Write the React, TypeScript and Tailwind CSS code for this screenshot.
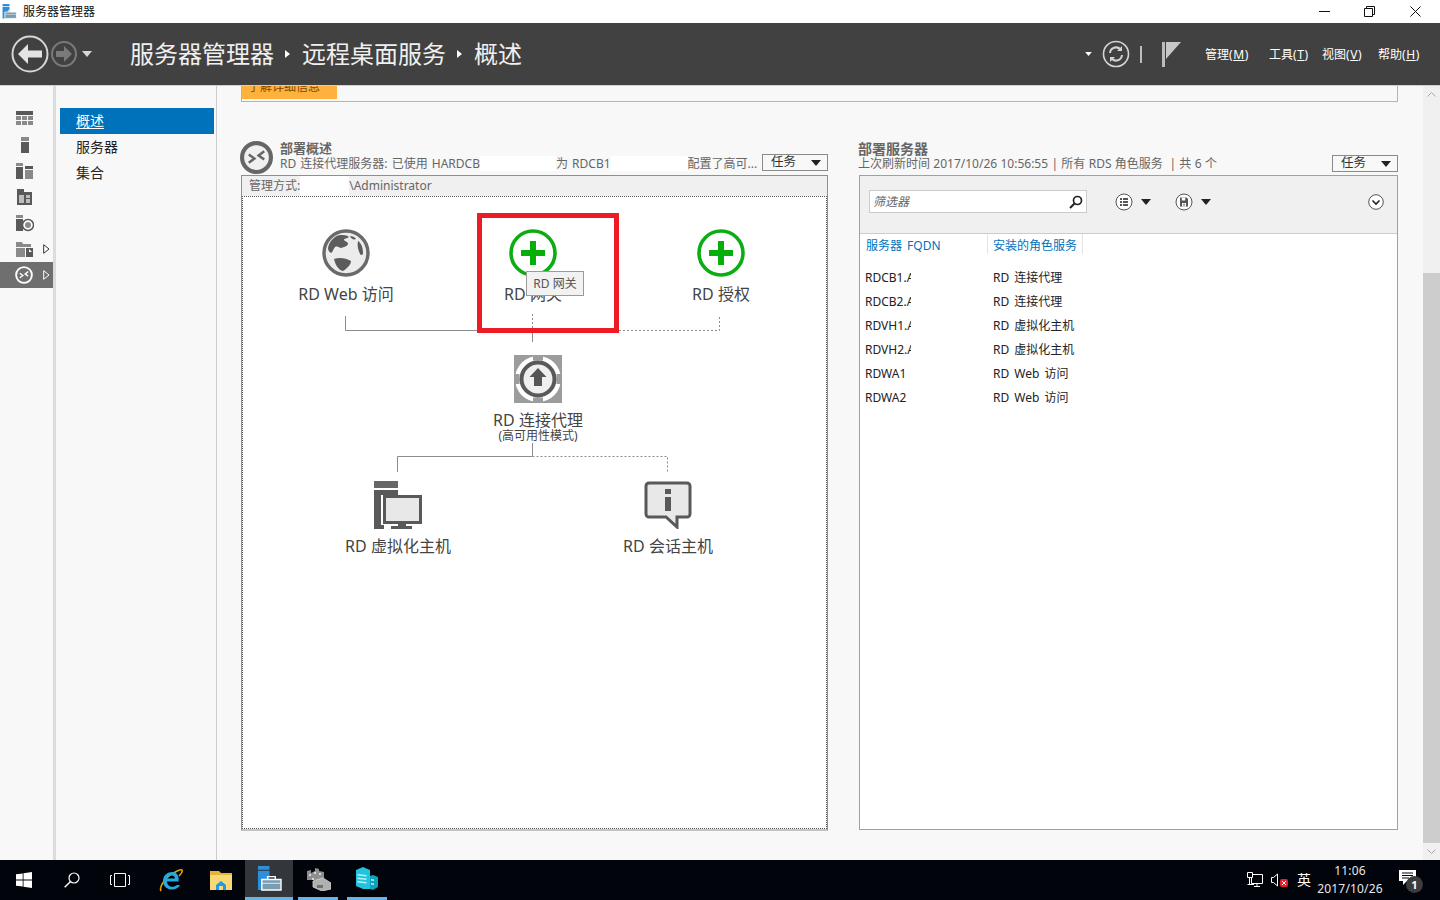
import React from "react";

const FONT = '"Noto Sans","Noto Sans CJK SC",sans-serif';

function Tri({ c = "#fff", w = 10, h = 6 }: { c?: string; w?: number; h?: number }) {
  return (
    <svg width={w} height={h} viewBox="0 0 10 6">
      <path d="M0 0h10L5 6z" fill={c} />
    </svg>
  );
}

function TasksBtn() {
  return (
    <div className="w-[66px] h-[17px] border border-[#8a8a8a] bg-[#f8f8f8] flex items-center justify-between pl-2 pr-[6px] text-[12.5px] leading-none text-[#333]">
      <span>任务</span>
      <Tri c="#222" />
    </div>
  );
}

function NavIcon({ i }: { i: number }) {
  const dark = "#595959";
  const mid = "#8a8a8a";
  const c = [
    <g key="0"><path d="M0 0h17v4H0z" fill={dark} /><path d="M0 5h5v4H0zM6 5h5v4H6zM12 5h5v4h-5zM0 10h5v4H0zM6 10h5v4H6zM12 10h5v4h-5z" fill={mid} /></g>,
    <g key="1"><path d="M5 0h8v4H5z" fill={mid} /><path d="M5 5h8v11H5z" fill={dark} /></g>,
    <g key="2"><path d="M0 0h7v3H0z" fill={mid} /><path d="M0 4h7v12H0z" fill={dark} /><path d="M9 3h8v3H9z" fill={dark} /><path d="M9 7h8v9H9z" fill={mid} /></g>,
    <g key="3"><path d="M1 0h7v3h8v13H1z" fill={dark} /><path d="M3 6h5v8H3zM10 6h4v3h-4zM10 10h4v4h-4z" fill="#bdbdbd" /></g>,
    <g key="4"><path d="M0 0h7v3H0z" fill={mid} /><path d="M0 4h7v12H0z" fill={dark} /><circle cx="12" cy="10" r="5.5" fill="#fff" stroke={dark} strokeWidth="1.5" /><circle cx="12" cy="10" r="3" fill={mid} /></g>,
    <g key="5"><path d="M0 1h6l1 2h8v3H0z" fill={mid} /><path d="M0 7h9v9H0z" fill={mid} /><path d="M10 7h7v9h-7z" fill={dark} /><path d="M13 8l3 3h-3z" fill="#fff" /></g>,
  ][i];
  return (
    <svg width="18" height="17" viewBox="0 0 18 17">
      {c}
    </svg>
  );
}

function RdsGlyph({ stroke, size, bg, sw = 3.4 }: { stroke: string; size: number; bg: string; sw?: number }) {
  return (
    <svg width={size} height={size} viewBox="0 0 32 32">
      <circle cx="16" cy="16" r="14" fill={bg} stroke={stroke} strokeWidth={sw} />
      <path d="M8.500 13l5.500 4-5.500 4M23.500 10l-5.500 4 5.500 4" fill="none" stroke={stroke} strokeWidth="2.400" />
    </svg>
  );
}

function Plus() {
  return (
    <svg width="48" height="48" viewBox="0 0 48 48">
      <circle cx="24" cy="24" r="22" fill="#fff" stroke="#0bad12" strokeWidth="3.6" />
      <path d="M21 12h6v9h9v6h-9v9h-6v-9h-9v-6h9z" fill="#07ae07" />
    </svg>
  );
}

function Globe() {
  return (
    <svg width="48" height="48" viewBox="0 0 48 48">
      <circle cx="24" cy="24" r="22" fill="#ececec" stroke="#6a6a6a" strokeWidth="3.400" />
      <path d="M6 19c1-6 6-12 12-13 3 0 7 0 9 2-2 2-5 1-5 3 1 2 4 1 4 4-1 3-5 3-7 4-3-1-4-2-6-1-2 2-2 5-4 6-2-1-3-3-3-5z" fill="#5c5c5c" />
      <path d="M12 30c5-2 12-1 17 2 0 4-5 8-8 10-5-1-8-7-9-12z" fill="#5c5c5c" />
      <path d="M36 12c3 2 5 6 5 12 0 2-2 3-3 1-2-4-3-9-2-13zM28 7c2 0 5 1 6 3-2 1-5 0-6-3z" fill="#5c5c5c" />
    </svg>
  );
}

function Broker() {
  return (
    <svg width="48" height="48" viewBox="0 0 48 48">
      <path d="M0 0h48v48H0z" fill="#9c9c9c" />
      <circle cx="24" cy="24" r="23" fill="#fff" />
      <path d="M19 0h10v5.500H19zM19 42.500h10V48H19zM0 19h5.500v10H0zM42.500 19H48v10h-5.500z" fill="#9c9c9c" />
      <circle cx="24" cy="24" r="16.500" fill="#efefef" stroke="#595959" strokeWidth="4" />
      <path d="M24 13l8.500 9H28v9h-8v-9h-4.500z" fill="#555" />
    </svg>
  );
}

function Virt() {
  return (
    <svg width="48" height="48" viewBox="0 0 48 48">
      <path d="M0 0h24v7H0z" fill="#666" />
      <path d="M0 9h24v5H7v30h3v4H0z" fill="#595959" />
      <path d="M9 14h39v29H32v2h6v3H17v-3h7v-2H9z" fill="#595959" />
      <path d="M12 17h33v23H12z" fill="#e8e8e8" />
    </svg>
  );
}

function Session() {
  return (
    <svg width="48" height="48" viewBox="0 0 48 48">
      <path d="M5 2h38a3 3 0 0 1 3 3v28a3 3 0 0 1-3 3H33v10L22 36H5a3 3 0 0 1-3-3V5a3 3 0 0 1 3-3z" fill="#e8e8e8" stroke="#595959" strokeWidth="3" />
      <path d="M21 8h6v5h-6zM21 16h6v14h-6z" fill="#595959" />
    </svg>
  );
}

function DiagramNode({ className, label, children }: { className: string; label: string; children: React.ReactNode }) {
  return (
    <div className={"absolute w-[160px] flex flex-col items-center " + className}>
      {children}
      <div className="mt-[6px] text-[16px] leading-[22px] text-[#444] whitespace-nowrap">{label}</div>
    </div>
  );
}

const rows = [
  ["RDCB1.AD", "RD 连接代理"],
  ["RDCB2.AD", "RD 连接代理"],
  ["RDVH1.AD", "RD 虚拟化主机"],
  ["RDVH2.AD", "RD 虚拟化主机"],
  ["RDWA1", "RD Web 访问"],
  ["RDWA2", "RD Web 访问"],
];

function Menu({ t, k, w }: { t: string; k: string; w: string }) {
  return (
    <div className={"mt-[1px] text-[12px] leading-none text-white whitespace-nowrap " + w}>
      {t}
      <span className="tracking-[0.6px]">(<span className="underline">{k}</span>)</span>
    </div>
  );
}

function TaskBtn({ className = "w-12", children }: { className?: string; children: React.ReactNode }) {
  return <div className={"h-10 flex items-center justify-center shrink-0 " + className}>{children}</div>;
}

function SmIcon({ size = 18 }: { size?: number }) {
  return (
    <svg width={size} height={size} viewBox="0 0 26 26">
      <path d="M1 0h12v4H1zM1 5h12v20H1z" fill="#2b8fdc" />
      <path d="M5 14h20v11H5z" fill="#7b9bb0" stroke="#fff" strokeWidth="1.400" />
      <path d="M5 18h20" stroke="#fff" strokeWidth=".8" />
      <path d="M11 14v-3h8v3" fill="none" stroke="#fff" strokeWidth="1.400" />
    </svg>
  );
}

export default function App() {
  return (
    <div className="w-[1440px] h-[900px] overflow-hidden flex flex-col bg-white" style={{ fontFamily: FONT }}>
      {/* title bar */}
      <div className="h-[23px] shrink-0 flex items-center bg-white pl-[2px]">
        <SmIcon size={15} />
        <span className="ml-[6px] text-[12px] leading-none text-[#111]">服务器管理器</span>
        <div className="ml-auto flex items-center">
          <div className="w-[47px] flex justify-center">
            <svg width="11" height="11" viewBox="0 0 11 11"><path d="M0 5.500h11" stroke="#111" /></svg>
          </div>
          <div className="w-[42px] flex justify-center">
            <svg width="11" height="11" viewBox="0 0 11 11"><path d="M.5 2.500h8v8h-8zM2.500 2.500v-2h8v8h-2" fill="none" stroke="#111" /></svg>
          </div>
          <div className="w-[50px] flex justify-center">
            <svg width="11" height="11" viewBox="0 0 11 11"><path d="M.5.500l10 10M10.500.500l-10 10" stroke="#111" /></svg>
          </div>
        </div>
      </div>

      {/* header */}
      <div className="h-[63px] shrink-0 bg-[#414141] border-b border-[#cfcfcf] flex items-center pl-[11px] pr-[21px]">
        <svg width="38" height="38" viewBox="0 0 38 38">
          <circle cx="19" cy="19" r="17.500" fill="none" stroke="#d6d6d6" strokeWidth="2" />
          <path d="M7 19l10-10v6.500h14v7H17V29z" fill="#e4e4e4" />
        </svg>
        <svg width="26" height="26" viewBox="0 0 26 26" className="ml-[2px]">
          <circle cx="13" cy="13" r="12" fill="none" stroke="#7a7a7a" strokeWidth="2" />
          <path d="M21 13l-8-8v5H5v6h8v5z" fill="#7a7a7a" />
        </svg>
        <span className="ml-[5px]"><Tri c="#d8d8d8" /></span>
        <div className="ml-[38px] flex items-center text-[24px] leading-none text-[#f0f0f0] whitespace-nowrap">
          <span>服务器管理器</span>
          <svg width="5" height="8" viewBox="0 0 5 8" className="ml-[11px] mr-[12px]"><path d="M0 0l5 4-5 4z" fill="#fff" /></svg>
          <span>远程桌面服务</span>
          <svg width="5" height="8" viewBox="0 0 5 8" className="ml-[11px] mr-[12px]"><path d="M0 0l5 4-5 4z" fill="#fff" /></svg>
          <span>概述</span>
        </div>
        <div className="ml-auto flex items-center">
          <Tri c="#fff" w={7} h={4} />
          <svg width="28" height="28" viewBox="0 0 28 28" className="ml-[10px]">
            <circle cx="14" cy="14" r="12.500" fill="none" stroke="#d4d4d4" strokeWidth="1.600" />
            <path d="M8 13a6 6 0 0 1 10.500-3.500M20 15a6 6 0 0 1-10.500 3.500" fill="none" stroke="#d4d4d4" strokeWidth="2" />
            <path d="M20 6v5h-5zM8 22v-5h5z" fill="#d4d4d4" />
          </svg>
          <div className="ml-[10px] w-[2px] h-[17px] bg-[#bdbdbd]" />
          <svg width="19" height="25" viewBox="0 0 19 25" className="ml-[20px] mr-[24px]">
            <path d="M0 0h3v25H0z" fill="#bdbdbd" />
            <path d="M4 0h15L4 17z" fill="#c8c8c8" />
          </svg>
          <Menu t="管理" k="M" w="w-[64px]" />
          <Menu t="工具" k="T" w="w-[53px]" />
          <Menu t="视图" k="V" w="w-[56px]" />
          <Menu t="帮助" k="H" w="w-[41px]" />
        </div>
      </div>

      {/* main */}
      <div className="flex-1 min-h-0 flex bg-[#f8f8f8]">
        {/* rail */}
        <div className="w-[56px] shrink-0 border-r-[3px] border-[#dcdcdc] pt-[20px] flex flex-col">
          {[0, 1, 2, 3, 4, 5].map((i) => (
            <div key={i} className="h-[26px] flex items-center pl-[16px] relative">
              <NavIcon i={i} />
              {i === 5 && (
                <svg width="7" height="10" viewBox="0 0 7 10" className="absolute left-[43px] top-[8px]"><path d="M.7 .7L6 5 .7 9.300z" fill="#fff" stroke="#333" /></svg>
              )}
            </div>
          ))}
          <div className="h-[26px] bg-[#6f6f6f] flex items-center pl-[15px] relative">
            <RdsGlyph stroke="#fff" size={18} bg="transparent" />
            <svg width="7" height="10" viewBox="0 0 7 10" className="absolute left-[43px] top-[8px]"><path d="M.7 .7L6 5 .7 9.300z" fill="none" stroke="#fff" /></svg>
          </div>
        </div>

        {/* nav */}
        <div className="w-[161px] shrink-0 border-r border-[#cccccc] pl-[4px] pt-[22px] text-[14px] leading-none text-[#222]">
          <div className="w-[154px] h-[26px] bg-[#0072bc] text-white flex items-center pl-[16px]"><span className="underline underline-offset-2">概述</span></div>
          <div className="w-[154px] h-[26px] flex items-center pl-[16px]">服务器</div>
          <div className="w-[154px] h-[26px] flex items-center pl-[16px]">集合</div>
        </div>

        {/* content */}
        <div className="flex-1 min-w-0 pl-[24px] pr-[25px]">
          <div className="h-[16px] border-b border-x border-[#b5b5b5] overflow-hidden bg-[#f8f8f8]">
            <div className="w-[95px] h-[13px] bg-[#ffb13d] overflow-hidden text-[12px] leading-none text-[#7a4a00] pl-[6px]">
              <div className="-mt-[5px] whitespace-nowrap">了解详细信息</div>
            </div>
          </div>

          <div className="flex mt-[38px] gap-[31px]">
            {/* left panel */}
            <div className="w-[587px] shrink-0">
              <div className="h-[35px] relative pl-[39px]">
                <div className="absolute -left-[1px] top-[1px]">
                  <RdsGlyph stroke="#666" size={33} bg="#f0f0f0" sw={4} />
                </div>
                <div className="text-[13px] leading-[15px] pt-[1px] font-bold text-[#666]">部署概述</div>
                <div className="text-[12px] leading-[15px] text-[#666] whitespace-nowrap flex [word-spacing:1px]">
                  <span>RD 连接代理服务器: 已使用 HARDCB</span>
                  <span className="w-[76px] h-[15px] bg-white" />
                  <span>为 RDCB1</span>
                  <span className="w-[77px] h-[15px] bg-white" />
                  <span>配置了高可...</span>
                </div>
                <div className="absolute right-0 top-[14px]"><TasksBtn /></div>
              </div>
              <div className="h-[656px] border border-[#8f8f8f] border-b-2 border-b-[#c4c4c4] bg-white flex flex-col">
                <div className="h-[20px] shrink-0 bg-[#f0f0f0] flex items-center pl-[7px] text-[12px] leading-none text-[#666] whitespace-nowrap">
                  <span>管理方式:</span>
                  <span className="w-[49px] h-[20px] bg-white" />
                  <span>\Administrator</span>
                </div>
                <div className="relative flex-1 border border-dotted border-[#555]">
                  <svg className="absolute left-0 top-0" width="583" height="632" viewBox="243 197 583 632">
                    <path d="M345.500 316v14.500H478" fill="none" stroke="#8c8c8c" />
                    <path d="M619 330.500h100.500V316" fill="none" stroke="#8c8c8c" strokeDasharray="2 2" />
                    <path d="M532.500 314v14" fill="none" stroke="#8c8c8c" strokeDasharray="2 2" />
                    <path d="M532.500 328v14" fill="none" stroke="#8c8c8c" />
                    <path d="M532.500 443v13.500H397.500V472" fill="none" stroke="#8c8c8c" />
                    <path d="M532.500 456.500h135V472" fill="none" stroke="#8c8c8c" strokeDasharray="2 2" />
                  </svg>
                  <DiagramNode className="left-[23px] top-[32px]" label="RD Web 访问"><Globe /></DiagramNode>
                  <DiagramNode className="left-[210px] top-[32px]" label="RD 网关"><Plus /></DiagramNode>
                  <DiagramNode className="left-[398px] top-[32px]" label="RD 授权"><Plus /></DiagramNode>
                  <DiagramNode className="left-[215px] top-[158px]" label="RD 连接代理">
                    <Broker />
                  </DiagramNode>
                  <div className="absolute left-[215px] top-[232px] w-[160px] text-center text-[12px] leading-[14px] text-[#444]">(高可用性模式)</div>
                  <DiagramNode className="left-[75px] top-[284px]" label="RD 虚拟化主机"><Virt /></DiagramNode>
                  <DiagramNode className="left-[345px] top-[284px]" label="RD 会话主机"><Session /></DiagramNode>

                  <div className="absolute left-[234px] top-[16px] w-[142px] h-[120px] border-[5px] border-[#ed1c24]" />
                  <div className="absolute left-[283px] top-[74px] w-[58px] h-[25px] bg-[#f2f2f2] border border-[#9a9a9a] text-[12px] leading-none text-[#555] flex items-center justify-center whitespace-nowrap">RD 网关</div>
                </div>
              </div>
            </div>

            {/* right panel */}
            <div className="w-[539px] shrink-0">
              <div className="h-[35px] relative -ml-[1px]">
                <div className="text-[14px] leading-[15px] pt-[1px] font-bold text-[#666]">部署服务器</div>
                <div className="text-[12px] leading-[15px] text-[#666] whitespace-nowrap [word-spacing:0.2px]">上次刷新时间 2017/10/26 10:56:55 | 所有 RDS 角色服务&nbsp;&nbsp;| 共 6 个</div>
                <div className="absolute right-0 top-[15px]"><TasksBtn /></div>
              </div>
              <div className="h-[655px] border border-[#a0a0a0] bg-white flex flex-col">
                <div className="h-[58px] shrink-0 bg-[#f0f0f0] border-b border-[#cccccc] flex items-center pl-[9px] pr-[13px] pb-[6px]">
                  <div className="w-[218px] h-[23px] bg-white border border-[#cccccc] flex items-center justify-between pl-[3px] pr-[3px] text-[12px] leading-none italic text-[#666]">
                    <span>筛选器</span>
                    <svg width="14" height="14" viewBox="0 0 14 14"><circle cx="8.500" cy="5.500" r="4" fill="none" stroke="#222" strokeWidth="1.700" /><path d="M5.500 8.500L1 13" stroke="#222" strokeWidth="2" /></svg>
                  </div>
                  <svg width="18" height="18" viewBox="0 0 18 18" className="ml-[28px]">
                    <circle cx="9" cy="9" r="8" fill="#fff" stroke="#555" />
                    <path d="M5 5h2v2H5zM8 5h5v2H8zM5 8h2v2H5zM8 8h5v2H8zM5 11h2v2H5zM8 11h5v2H8z" fill="#555" />
                  </svg>
                  <span className="ml-[8px]"><Tri c="#222" /></span>
                  <svg width="18" height="18" viewBox="0 0 18 18" className="ml-[24px]">
                    <circle cx="9" cy="9" r="8" fill="#fff" stroke="#555" />
                    <path d="M5 4.500h6.500L13 6v7.500H5z" fill="#555" />
                    <path d="M6.800 4.500h3.400v3H6.800zM7 10h4v3.500H7z" fill="#fff" />
                    <path d="M8.500 10.500h1v2.500h-1z" fill="#555" />
                  </svg>
                  <span className="ml-[8px]"><Tri c="#222" /></span>
                  <svg width="16" height="16" viewBox="0 0 16 16" className="ml-auto">
                    <circle cx="8" cy="8" r="7.300" fill="#fff" stroke="#555" />
                    <path d="M4.500 6.500L8 10l3.500-3.500" fill="none" stroke="#222" strokeWidth="1.600" />
                  </svg>
                </div>
                <div className="h-[20px] flex text-[12px] leading-none text-[#0072bc] whitespace-nowrap [word-spacing:2px]">
                  <div className="w-[128px] pl-[6px] pt-[6px] border-r border-[#e3e3e3]">服务器 FQDN</div>
                  <div className="w-[95px] pl-[5px] pt-[6px] border-r border-[#e3e3e3]">安装的角色服务</div>
                </div>
                <div className="pt-[12px]">
                  {rows.map((r) => (
                    <div key={r[0] + r[1]} className="h-[24px] flex items-center text-[12px] leading-none text-[#222] whitespace-nowrap [word-spacing:2px]">
                      <div className="w-[46px] ml-[5px] mr-[82px] overflow-hidden">{r[0]}</div>
                      <div>{r[1]}</div>
                    </div>
                  ))}
                </div>
              </div>
            </div>
          </div>
        </div>

        {/* scrollbar */}
        <div className="w-[17px] shrink-0 bg-[#f0f0f0] flex flex-col items-center">
          <div className="h-[17px] flex items-center justify-center">
            <svg width="9" height="6" viewBox="0 0 9 6"><path d="M.5 5.500l4-4 4 4" fill="none" stroke="#a6a6a6" /></svg>
          </div>
          <div className="w-full h-[170px]" />
          <div className="w-full h-[571px] bg-[#cdcdcd]" />
          <div className="h-[17px] flex items-center justify-center">
            <svg width="9" height="6" viewBox="0 0 9 6"><path d="M.5 .5l4 4 4-4" fill="none" stroke="#a6a6a6" /></svg>
          </div>
        </div>
      </div>

      {/* taskbar */}
      <div className="h-10 shrink-0 bg-[#01040a] flex items-center text-white">
        <TaskBtn>
          <svg width="16" height="16" viewBox="0 0 16 16"><path d="M0 2.300l6.700-.9v6.200H0zM7.500 1.300L16 0v7.600H7.500zM0 8.400h6.700v6.200L0 13.700zM7.500 8.400H16V16l-8.500-1.300z" fill="#fff" /></svg>
        </TaskBtn>
        <TaskBtn>
          <svg width="16" height="16" viewBox="0 0 16 16"><circle cx="10" cy="6" r="5" fill="none" stroke="#fff" strokeWidth="1.200" /><path d="M6.500 9.500L.7 15.300" stroke="#fff" strokeWidth="1.400" /></svg>
        </TaskBtn>
        <TaskBtn>
          <svg width="20" height="14" viewBox="0 0 20 14"><path d="M4.500 .5h11v13h-11zM2 2.500H.5v9H2M18 2.500h1.500v9H18" fill="none" stroke="#fff" /></svg>
        </TaskBtn>
        <TaskBtn className="w-[54px]">
          <svg width="24" height="24" viewBox="0 0 24 24">
            <path d="M2 23c-2-3 3-12 9-16 5-3 11-6 12-5 1 2-3 6-3 6" fill="none" stroke="#e0a800" strokeWidth="1.600" />
            <path d="M19.500 13.500H8c0 5 6 7 10 3.500h3c-3 7-17 6-17-4 0-6 5-9 9-9s7.500 3 6.500 9.500zM8 10.500h8c0-4-7-4-8 0z" fill="#27a8e0" />
          </svg>
        </TaskBtn>
        <TaskBtn className="w-[46px]">
          <svg width="22" height="19" viewBox="0 0 22 19">
            <path d="M0 0h9l2 2h11v3H0z" fill="#e9b23a" />
            <path d="M0 4h22v15H0z" fill="#f8d775" />
            <path d="M6 19v-5l5-4 5 4v5h-3v-4H9v4z" fill="#1c9be6" />
          </svg>
        </TaskBtn>
        <div className="ml-[1px] w-[48px] h-10 shrink-0 bg-[#33363a] border-b-[3px] border-[#66b5ea] flex items-center justify-center">
          <SmIcon size={25} />
        </div>
        <TaskBtn className="w-[50px]">
          <div className="h-10 w-[40px] border-b-[3px] border-[#66b5ea] flex items-center justify-center">
            <svg width="25" height="24" viewBox="0 0 25 24">
              <path d="M1 4l4-1v3l4-2V1l4 1v2l5 1v8H1z" fill="#8e8e8e" />
              <path d="M3 7h2v2H3zM8 5h2v2H8zM13 6h2v2h-2zM6 11h2v2H6z" fill="#d8d8d8" />
              <path d="M7 14l10-3 8 5v6l-9 2-9-4z" fill="#b0b0b0" stroke="#d4d4d4" strokeWidth=".8" />
              <path d="M11 18h6v3h-6z" fill="#707070" />
            </svg>
          </div>
        </TaskBtn>
        <TaskBtn className="w-[48px]">
          <div className="h-10 w-[40px] border-b-[3px] border-[#66b5ea] flex items-center justify-center">
            <svg width="22" height="23" viewBox="0 0 22 23">
              <path d="M0 3l7-3 7 3v19H7L0 19z" fill="#21c4dc" />
              <path d="M14 9l3-1 5 2v10l-5 3-3-1z" fill="#0fa3bd" />
              <path d="M1.500 7l9 1v1.500l-9-1zM1.500 10.500l9 1V13l-9-1zM1.500 14l9 1v1.500l-9-1zM15 12l3 .5v1.500l-3-.5zM15 16l3 .5V18l-3-.5z" fill="#b8f3f9" />
            </svg>
          </div>
        </TaskBtn>

        <div className="ml-auto flex items-center">
          <svg width="16" height="16" viewBox="0 0 16 16">
            <path d="M4.500 2.500h11v9H4.500z" fill="none" stroke="#fff" />
            <path d="M.5 .5h5v5h-5z" fill="#01040a" stroke="#fff" />
            <path d="M2.500 6v6.500M.5 12.500H7M10 11.500v3M7 14.500h6" stroke="#fff" />
          </svg>
          <svg width="18" height="14" viewBox="0 0 18 14" className="ml-[8px]">
            <path d="M.5 4.500h2l4-3.500v12l-4-3.500h-2z" fill="none" stroke="#fff" />
            <rect x="9" y="6" width="8" height="8" rx="2" fill="#e2212b" />
            <path d="M11 8l4 4M15 8l-4 4" stroke="#fff" />
          </svg>
          <span className="ml-[8px] text-[14px] leading-none">英</span>
          <div className="ml-[4px] w-[70px] text-center text-[12px] leading-[18px] text-[#e8e8e8] tracking-[0.15px]">
            <div>11:06</div>
            <div className="whitespace-nowrap">2017/10/26</div>
          </div>
          <div className="relative ml-[14px] mr-[21px] w-[20px] h-[20px]">
            <svg width="18" height="16" viewBox="0 0 18 16" className="absolute left-0 top-0">
              <path d="M0 0h17v11H8l-4 4v-4H0z" fill="#fff" />
              <path d="M3 3h11M3 5.500h11M3 8h7" stroke="#01040a" />
            </svg>
            <div className="absolute left-[7px] top-[6px] w-[17px] h-[17px] rounded-full bg-[#3c3c3c] text-[11px] leading-none font-bold text-white flex items-center justify-center">1</div>
          </div>
        </div>
      </div>
    </div>
  );
}
